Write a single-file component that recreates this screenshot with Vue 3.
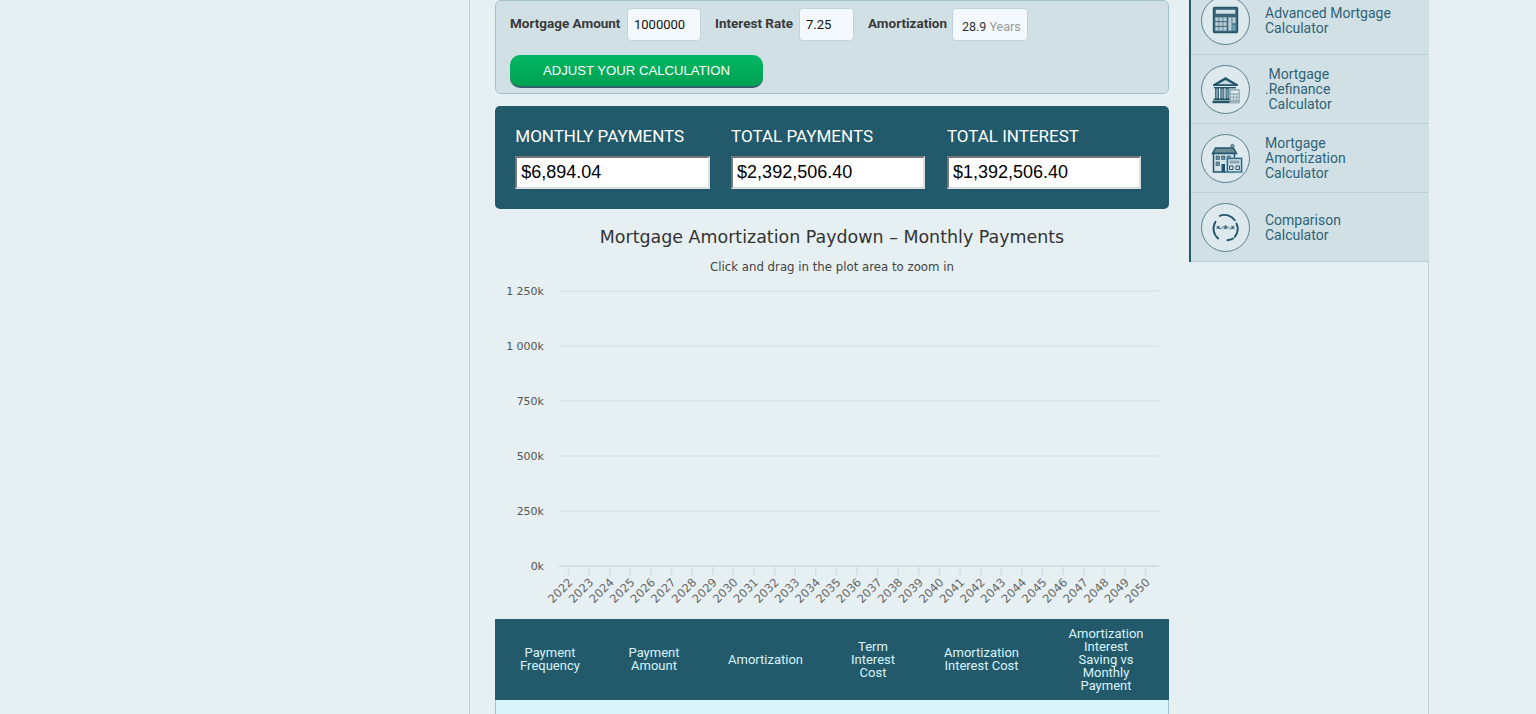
<script setup>
const years = Array.from({ length: 29 }, (_, i) => 2022 + i);
const tickX = (i) => 73.5 + i * 20.61;

const yTicks = [
  { label: "1 250k", y: 82 },
  { label: "1 000k", y: 137 },
  { label: "750k", y: 192 },
  { label: "500k", y: 247 },
  { label: "250k", y: 302 },
];

const results = [
  { label: "MONTHLY PAYMENTS", value: "$6,894.04" },
  { label: "TOTAL PAYMENTS", value: "$2,392,506.40" },
  { label: "TOTAL INTEREST", value: "$1,392,506.40" },
];

const columns = [
  ["Payment", "Frequency"],
  ["Payment", "Amount"],
  ["Amortization"],
  ["Term", "Interest", "Cost"],
  ["Amortization", "Interest Cost"],
  ["Amortization", "Interest", "Saving vs", "Monthly", "Payment"],
];

const links = [
  { icon: "calc", lines: ["Advanced Mortgage", "Calculator"] },
  { icon: "bank", lines: ["\u00a0Mortgage", ".Refinance", "\u00a0Calculator"] },
  { icon: "house", lines: ["Mortgage", "Amortization", "Calculator"] },
  { icon: "compare", lines: ["Comparison", "Calculator"] },
];

// small keys of the calculator icon, three columns and three rows
const calcKeys = [];
for (let r = 0; r < 3; r++) {
  for (let c = 0; c < 3; c++) calcKeys.push({ x: 14.3 + c * 4, y: 21.3 + r * 4.8 });
}
</script>

<template>
  <div class="page">
    <div class="wrap">
      <main class="main">
        <section class="adjust">
          <div class="fields">
            <label class="field">
              <span class="field-label label-amount">Mortgage Amount</span>
              <input class="field-input amount" value="1000000" />
            </label>
            <label class="field">
              <span class="field-label label-rate">Interest Rate</span>
              <input class="field-input rate" value="7.25" />
            </label>
            <div class="field">
              <span class="field-label label-term">Amortization</span>
              <div class="years">28.9 <span class="years-unit">Years</span></div>
            </div>
          </div>
          <button class="adjust-btn">ADJUST YOUR CALCULATION</button>
        </section>

        <section class="results">
          <div v-for="r in results" :key="r.label" class="result">
            <div class="result-label">{{ r.label }}</div>
            <input class="result-input" :value="r.value" readonly />
          </div>
        </section>

        <svg class="chart" width="674" height="410" viewBox="0 0 674 410">
          <text x="337" y="34" class="chart-title" text-anchor="middle">Mortgage Amortization Paydown – Monthly Payments</text>
          <text x="337" y="62" class="chart-sub" text-anchor="middle">Click and drag in the plot area to zoom in</text>
          <g v-for="t in yTicks" :key="t.label">
            <line x1="64" x2="664" :y1="t.y" :y2="t.y" class="grid" />
            <text x="49" :y="t.y + 4" class="y-label" text-anchor="end">{{ t.label }}</text>
          </g>
          <line x1="64" x2="664" y1="357" y2="357" class="axis" />
          <text x="49" y="361" class="y-label" text-anchor="end">0k</text>
          <g v-for="(year, i) in years" :key="year">
            <line :x1="tickX(i)" :x2="tickX(i)" y1="357" y2="366" class="tick" />
            <text
              :x="tickX(i) + 5"
              y="374"
              class="x-label"
              text-anchor="end"
              :transform="`rotate(-45 ${tickX(i) + 5} 374)`"
            >{{ year }}</text>
          </g>
        </svg>

        <div class="table-head">
          <div v-for="(col, i) in columns" :key="i" class="th">
            <div v-for="line in col" :key="line">{{ line }}</div>
          </div>
        </div>
        <div class="table-row"></div>
      </main>

      <aside class="side">
        <a v-for="link in links" :key="link.icon" class="side-item">
          <svg class="side-icon" width="49" height="49" viewBox="0 0 49 49">
            <circle cx="24.5" cy="24.5" r="24" class="ring" />

            <g v-if="link.icon === 'calc'">
              <rect x="12.500" y="11.500" width="24" height="25" rx="1" fill="#3b687b" stroke="#24566b" stroke-width="1.400" />
              <rect x="14.500" y="13.500" width="20" height="4.500" fill="#d3e2e7" stroke="#24566b" stroke-width=".5" />
              <rect v-for="(k, n) in calcKeys" :key="n" :x="k.x" :y="k.y" width="3.300" height="3.800" fill="#b7ccd5" />
              <rect x="27.300" y="21.300" width="3.300" height="13.400" fill="#b7ccd5" />
              <rect x="31.300" y="21.300" width="3.300" height="6" fill="#b7ccd5" />
              <rect x="31.300" y="28.700" width="3.300" height="6" fill="#6f9fbd" />
            </g>

            <g v-else-if="link.icon === 'bank'" fill="#24566b">
              <path d="M12 19.500 24.500 12 37 19.500v1.500H12z" />
              <path d="M17 19.300 24.500 15l7.500 4.300z" fill="#c9dae0" />
              <rect x="13" y="22" width="22" height="1.400" />
              <path d="M14.500 23.500h3v10h-3zM19.800 23.500h3v10h-3zM25 23.500h3v10h-3z" fill="#7d9aa7" stroke="#24566b" stroke-width=".8" />
              <rect x="12.500" y="33.500" width="17" height="1.800" />
              <rect x="11.500" y="35.800" width="18" height="2.400" />
              <rect x="28.500" y="24" width="10.500" height="14.500" rx="1" fill="#9ab2bc" />
              <rect x="30" y="25.800" width="7.500" height="2.400" fill="#e3edf0" />
              <path d="M30 30h2v1.500h-2zM33 30h2v1.500h-2zM36 30h1.500v1.500H36zM30 33h2v1.500h-2zM33 33h2v1.500h-2zM36 33h1.500v1.500H36z" fill="#e3edf0" />
            </g>

            <g v-else-if="link.icon === 'house'">
              <path d="M11.500 19.500l3-5.500h18l3 5.500z" fill="#6d8d9b" stroke="#24566b" stroke-width="1.500" />
              <circle cx="31.500" cy="12" r="1.700" fill="#7f9dab" stroke="#24566b" stroke-width=".6" />
              <rect x="12.500" y="19.500" width="21" height="18.500" fill="#d3e2e7" stroke="#24566b" stroke-width="1.500" />
              <path d="M15 22h3.500v3.500H15zM20.500 22H24v3.500h-3.500zM26 22h3.500v3.500H26zM15 28h3.500v3.500H15z" fill="#6f8f9d" stroke="#24566b" stroke-width=".6" />
              <rect x="20.500" y="30" width="3.500" height="8" fill="#24566b" />
              <rect x="26.500" y="24.500" width="14" height="13.500" fill="#d3e2e7" stroke="#24566b" stroke-width="1.300" />
              <rect x="25.800" y="23.800" width="15.400" height="15" fill="none" stroke="#6faed3" stroke-width=".7" />
              <rect x="28.500" y="26.500" width="10" height="3" fill="#8ba6b2" />
              <path d="M28.500 32h3.500v3.500h-3.500zM35 32h3.500v3.500H35z" fill="none" stroke="#24566b" stroke-width="1" />
            </g>

            <g v-else>
              <g fill="none" stroke="#24566b" stroke-width="1.900" stroke-linecap="round">
                <path d="M14.500 18.800A12.700 12.700 0 0 0 17.200 35.500" />
                <path d="M18.800 12.800A12.700 12.700 0 0 1 33.800 17.200" />
                <path d="M35.500 20.500A12.700 12.700 0 0 1 33.800 33.800" />
                <path d="M32.200 35.500A12.700 12.700 0 0 1 26.500 37.200" />
              </g>
              <g fill="none" stroke="#3b687b" stroke-width=".9">
                <path d="M15.500 22.800l1.700 1.700-1.700 1.700M19 22.800l-1.800 1.700L19 26.200M19 26.200l2.500-1.700 3 -2 3 2 2.500 1.700M30 22.800l1.800 1.700-1.800 1.700M33.500 22.800l-1.700 1.700 1.700 1.700M22.500 26l2-1.500 2 1.500" />
                <circle cx="17.200" cy="24.500" r=".9" fill="#24566b" />
                <circle cx="24.500" cy="24.500" r=".9" fill="#24566b" />
                <circle cx="31.800" cy="24.500" r=".9" fill="#24566b" />
              </g>
            </g>
          </svg>
          <span class="side-text" :class="{ two: link.lines.length === 2 }">
            <span v-for="line in link.lines" :key="line" class="side-line">{{ line }}</span>
          </span>
        </a>
      </aside>
    </div>
  </div>
</template>

<style>
html,
body {
  margin: 0;
  background: #e6eff2;
}
</style>

<style scoped>
.page {
  height: 714px;
  overflow: hidden;
  padding-left: 469px;
  font-family: Roboto, "Liberation Sans", sans-serif;
}

.wrap {
  width: 960px;
  height: 714px;
  box-sizing: border-box;
  border-left: 1px solid #bfd0d8;
  border-right: 1px solid #bfd0d8;
  padding-left: 25px;
  display: flex;
  gap: 20px;
}

.main {
  width: 674px;
  flex: none;
}

.adjust {
  height: 94px;
  box-sizing: border-box;
  background: #d1e0e5;
  border: 1px solid #a3c2ce;
  border-radius: 6px;
  padding: 7px 14px 0;
}

.fields {
  display: flex;
  gap: 14px;
}

.field {
  display: flex;
  align-items: flex-start;
  gap: 5px;
}

.field-label {
  font-size: 13.5px;
  font-weight: 700;
  line-height: 16px;
  margin-top: 7px;
  color: #3a3a3a;
  white-space: nowrap;
}

.label-amount {
  width: 112px;
}

.label-rate {
  width: 79px;
}

.label-term {
  width: 79px;
}

.field-input,
.years {
  height: 33px;
  box-sizing: border-box;
  background: #f3f9fc;
  border: 1px solid #bfd3dc;
  border-radius: 4px;
  font-family: Roboto, sans-serif;
  font-size: 13px;
  color: #111;
  padding: 0 6px;
  outline: none;
}

.amount {
  width: 74px;
}

.rate {
  width: 55px;
}

.years {
  width: 76px;
  font-size: 12.5px;
  color: #333;
  padding: 3px 0 0 9px;
  line-height: 29px;
  white-space: pre;
}

.years-unit {
  color: #999;
}

.adjust-btn {
  display: block;
  width: 253px;
  height: 33px;
  margin-top: 14px;
  border: 0;
  border-bottom: 2px solid #2f5f6a;
  border-radius: 10px;
  background: linear-gradient(#02b763, #00a152);
  color: #fff;
  font-family: "Liberation Sans", sans-serif;
  font-size: 13.15px;
  padding: 0;
}

.results {
  margin-top: 12px;
  height: 103px;
  box-sizing: border-box;
  background: #225a6b;
  border-radius: 5px;
  padding: 20px 0 0 20.3px;
  display: grid;
  grid-template-columns: repeat(3, 194.3px);
  gap: 21.5px;
}

.result-label {
  color: #fff;
  font-size: 17px;
  line-height: 20px;
  margin-bottom: 10px;
  white-space: nowrap;
}

.result-input {
  display: block;
  width: 100%;
  height: 33px;
  box-sizing: border-box;
  border: 2px solid;
  border-color: #767676 #dedede #dedede #767676;
  background: #fff;
  font-family: "Liberation Sans", sans-serif;
  font-size: 18px;
  color: #000;
  padding: 0 4px;
  outline: none;
}

.chart {
  display: block;
}

.chart-title {
  font-family: "DejaVu Sans", sans-serif;
  font-size: 17.45px;
  fill: #333;
}

.chart-sub {
  font-family: "DejaVu Sans", sans-serif;
  font-size: 11.75px;
  fill: #444;
}

.grid {
  stroke: #d8e2e6;
  stroke-width: 1.5;
}

.axis {
  stroke: #d2dde5;
  stroke-width: 2;
}

.tick {
  stroke: #d2dde5;
  stroke-width: 1.5;
}

.y-label,
.x-label {
  font-family: "DejaVu Sans", sans-serif;
  font-size: 11px;
  fill: #555;
}

.x-label {
  font-size: 11.5px;
  fill: #666;
}

.table-head {
  height: 81px;
  box-sizing: border-box;
  padding-bottom: 1px;
  background: #225a6b;
  display: grid;
  grid-template-columns: 110px 98px 125px 90px 127px 122px;
  align-items: center;
  text-align: center;
  color: #d9f3fb;
  font-size: 13px;
  line-height: 13px;
}

.table-row {
  height: 20px;
  box-sizing: border-box;
  background: #d9f3fb;
  border: 1px solid #a3c2ce;
  border-top: 0;
}

.side {
  width: 240px;
  height: 276px;
  margin-top: -14px;
  flex: none;
  box-sizing: border-box;
  background: #d1e0e5;
  border-left: 2px solid #225a6b;
}

.side-item {
  height: 69px;
  box-sizing: border-box;
  border-bottom: 1px solid #b8ced8;
  padding-left: 10px;
  display: flex;
  align-items: center;
  gap: 15px;
  color: #2f6377;
  font-size: 14px;
  line-height: 15px;
}

.side-icon {
  flex: none;
}

.ring {
  fill: #dde9ed;
  stroke: #5b7f8b;
  stroke-width: 1;
}

.side-text.two {
  margin-top: 2px;
}

.side-line {
  display: block;
}
</style>
